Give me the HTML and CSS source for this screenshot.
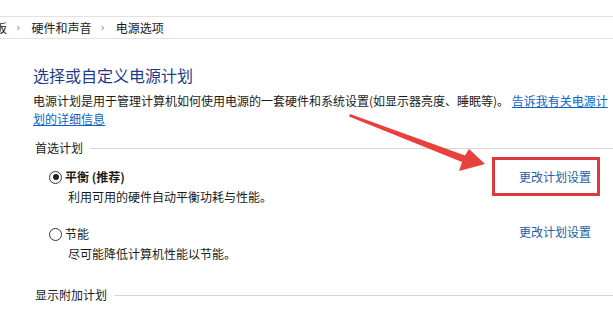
FILE: index.html
```html
<!DOCTYPE html>
<html lang="zh-CN">
<head>
<meta charset="utf-8">
<link rel="stylesheet" href="styles.css">
</head>
<body>
<div class="page">
  <nav class="crumbs">
    <span class="crumb">板</span><span class="sep">›</span>
    <span class="crumb">硬件和声音</span><span class="sep">›</span>
    <span class="crumb">电源选项</span>
  </nav>
  <main class="content">
    <h1 class="title">选择或自定义电源计划</h1>
    <p class="desc">电源计划是用于管理计算机如何使用电源的一套硬件和系统设置(如显示器亮度、睡眠等)。 <a class="more" href="#">告诉我有关电源计<br>划的详细信息</a></p>
    <div class="group-head"><span>首选计划</span><span class="rule"></span></div>
    <div class="plan plan-first">
      <div class="plan-row">
        <label class="plan-name bold"><span class="radio checked"></span>平衡 (推荐)</label>
        <a class="change" href="#">更改计划设置</a>
      </div>
      <div class="plan-desc">利用可用的硬件自动平衡功耗与性能。</div>
    </div>
    <div class="plan plan-second">
      <div class="plan-row">
        <label class="plan-name"><span class="radio"></span>节能</label>
        <a class="change" href="#">更改计划设置</a>
      </div>
      <div class="plan-desc">尽可能降低计算机性能以节能。</div>
    </div>
    <div class="group-head group-extra"><span>显示附加计划</span><span class="rule"></span></div>
  </main>
  <div class="highlight"></div>
  <svg class="arrow" viewBox="0 0 613 315" width="613" height="315">
    <polygon points="350,114 465,155.5 469,149 485,164 459,171 462,162 349,116.5" fill="#e8403b"/>
  </svg>
</div>
</body>
</html>
```
FILE: styles.css
```css
html, body {
  margin: 0;
  padding: 0;
  background: #ffffff;
}
body {
  width: 613px;
  height: 315px;
  overflow: hidden;
  font-family: "Noto Sans CJK SC", "Noto Sans", sans-serif;
  font-size: 12px;
  color: #1a1a1a;
}
.page {
  position: relative;
  width: 613px;
  height: 315px;
  overflow: hidden;
}
.crumbs {
  margin-top: 16px;
  height: 21px;
  border-top: 1px solid #e2e2e2;
  border-bottom: 1px solid #e2e2e2;
  display: flex;
  align-items: center;
  margin-left: -5px;
  line-height: 21px;
  white-space: nowrap;
}
.sep {
  font-family: "DejaVu Sans", sans-serif;
  font-size: 11px;
  color: #8a8a8a;
  margin: 0 11px 0 9px;
}
.content {
  padding-left: 33px;
}
.title {
  margin: 25px 0 0;
  font-size: 16px;
  font-weight: normal;
  line-height: 22px;
  color: #1f3c8a;
}
.desc {
  margin: 6px 0 0;
  line-height: 18px;
  width: 580px;
}
.more {
  color: #0c63c7;
  text-decoration: underline;
}
.group-head {
  margin-top: 11px;
  display: flex;
  align-items: center;
  line-height: 18px;
  padding-left: 2px;
}
.rule {
  flex: 1;
  height: 1px;
  background: #d5d5d5;
  margin-left: 7px;
}
.group-extra {
  margin-top: 23px;
}
.plan {
  padding-left: 16px;
  padding-right: 22px;
}
.plan-first {
  margin-top: 11px;
}
.plan-second {
  margin-top: 19px;
}
.plan-row {
  display: flex;
  justify-content: space-between;
  align-items: center;
  line-height: 18px;
}
.plan-name {
  display: flex;
  align-items: center;
}
.bold {
  font-weight: bold;
}
.radio {
  width: 11px;
  height: 11px;
  border: 1px solid #333;
  border-radius: 50%;
  margin-right: 3px;
  box-sizing: content-box;
  display: flex;
  align-items: center;
  justify-content: center;
}
.radio.checked::after {
  content: "";
  width: 6px;
  height: 6px;
  border-radius: 50%;
  background: #222;
}
.change {
  color: #1d5ea8;
  text-decoration: none;
}
.plan-second .change {
  position: relative;
  top: -2px;
}
.plan-desc {
  margin-top: 2px;
  padding-left: 19px;
  line-height: 18px;
}
.highlight {
  position: absolute;
  left: 492px;
  top: 157px;
  width: 108px;
  height: 39px;
  box-sizing: border-box;
  border: 3px solid #dc3a3e;
}
.arrow {
  position: absolute;
  left: 0;
  top: 0;
}
```
